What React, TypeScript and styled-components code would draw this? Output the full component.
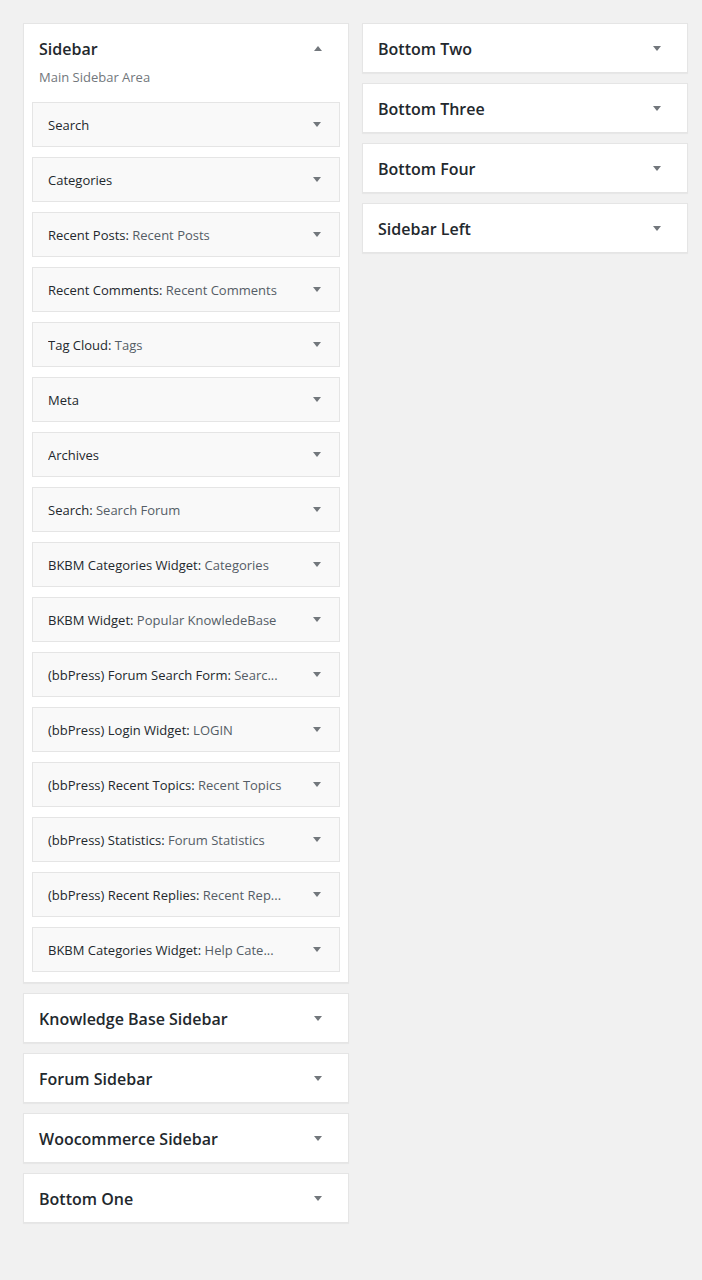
import { FC } from 'react';
import styled, { createGlobalStyle } from 'styled-components';

const GlobalStyle = createGlobalStyle`
    body {
        margin: 0;
        background: #f1f1f1;
        font-family: "Open Sans", "Noto Sans", sans-serif;
        color: #23282d;
    }
`;

const Page = styled.div`
    display: grid;
    grid-template-columns: 326px 326px;
    column-gap: 13px;
    align-items: start;
    padding: 23px 0 40px 23px;
`;

const Column = styled.div`
    display: flex;
    flex-direction: column;
    gap: 10px;
`;

const Card = styled.div`
    background: #fff;
    border: 1px solid #e5e5e5;
    box-shadow: 0 1px 1px rgba(0, 0, 0, 0.04);
`;

const CardHeader = styled.div`
    display: flex;
    align-items: center;
    height: 48px;
    padding-left: 15px;
`;

const CardTitle = styled.h2`
    flex: 1;
    margin: 0;
    padding-top: 2px;
    font-size: 16px;
    font-weight: 600;
    color: #23282d;
`;

const Description = styled.p`
    margin: -4px 15px 0;
    font-size: 13px;
    line-height: 18px;
    color: #72777c;
`;

const WidgetList = styled.div`
    display: flex;
    flex-direction: column;
    gap: 10px;
    padding: 16px 8px 10px;
`;

const Widget = styled.div`
    display: flex;
    align-items: center;
    height: 43px;
    padding-left: 15px;
    background: #f9f9f9;
    border: 1px solid #e5e5e5;
`;

const WidgetTitle = styled.h3`
    flex: 1;
    margin: 0;
    font-size: 13px;
    font-weight: 400;
    color: #23282d;
    white-space: nowrap;
    overflow: hidden;
`;

const InTitle = styled.span`
    color: #555d66;
`;

const Toggle = styled.span<{ $space: number }>`
    display: flex;
    justify-content: center;
    align-items: center;
    width: ${p => p.$space}px;
    flex-shrink: 0;
`;

const Arrow = styled.span<{ $up?: boolean }>`
    width: 0;
    height: 0;
    border-left: 4px solid transparent;
    border-right: 4px solid transparent;
    ${p => p.$up
        ? 'border-bottom: 5px solid #72777c;'
        : 'border-top: 5px solid #72777c;'}
`;

const widgets: [string, string?][] = [
    ['Search'],
    ['Categories'],
    ['Recent Posts', 'Recent Posts'],
    ['Recent Comments', 'Recent Comments'],
    ['Tag Cloud', 'Tags'],
    ['Meta'],
    ['Archives'],
    ['Search', 'Search Forum'],
    ['BKBM Categories Widget', 'Categories'],
    ['BKBM Widget', 'Popular KnowledeBase'],
    ['(bbPress) Forum Search Form', 'Searc...'],
    ['(bbPress) Login Widget', 'LOGIN'],
    ['(bbPress) Recent Topics', 'Recent Topics'],
    ['(bbPress) Statistics', 'Forum Statistics'],
    ['(bbPress) Recent Replies', 'Recent Rep...'],
    ['BKBM Categories Widget', 'Help Cate...'],
];

const CollapsedArea: FC<{ name: string }> = ({ name }) => (
    <Card>
        <CardHeader>
            <CardTitle>{name}</CardTitle>
            <Toggle $space={60}><Arrow /></Toggle>
        </CardHeader>
    </Card>
);

const App: FC = () => (
    <>
        <GlobalStyle />
        <Page>
            <Column>
                <Card>
                    <CardHeader>
                        <CardTitle>Sidebar</CardTitle>
                        <Toggle $space={60}><Arrow $up /></Toggle>
                    </CardHeader>
                    <Description>Main Sidebar Area</Description>
                    <WidgetList>
                        {widgets.map(([name, title], i) => (
                            <Widget key={i}>
                                <WidgetTitle>
                                    {name}
                                    {title && <>: <InTitle>{title}</InTitle></>}
                                </WidgetTitle>
                                <Toggle $space={44}><Arrow /></Toggle>
                            </Widget>
                        ))}
                    </WidgetList>
                </Card>
                <CollapsedArea name="Knowledge Base Sidebar" />
                <CollapsedArea name="Forum Sidebar" />
                <CollapsedArea name="Woocommerce Sidebar" />
                <CollapsedArea name="Bottom One" />
            </Column>
            <Column>
                <CollapsedArea name="Bottom Two" />
                <CollapsedArea name="Bottom Three" />
                <CollapsedArea name="Bottom Four" />
                <CollapsedArea name="Sidebar Left" />
            </Column>
        </Page>
    </>
);

export default App;
